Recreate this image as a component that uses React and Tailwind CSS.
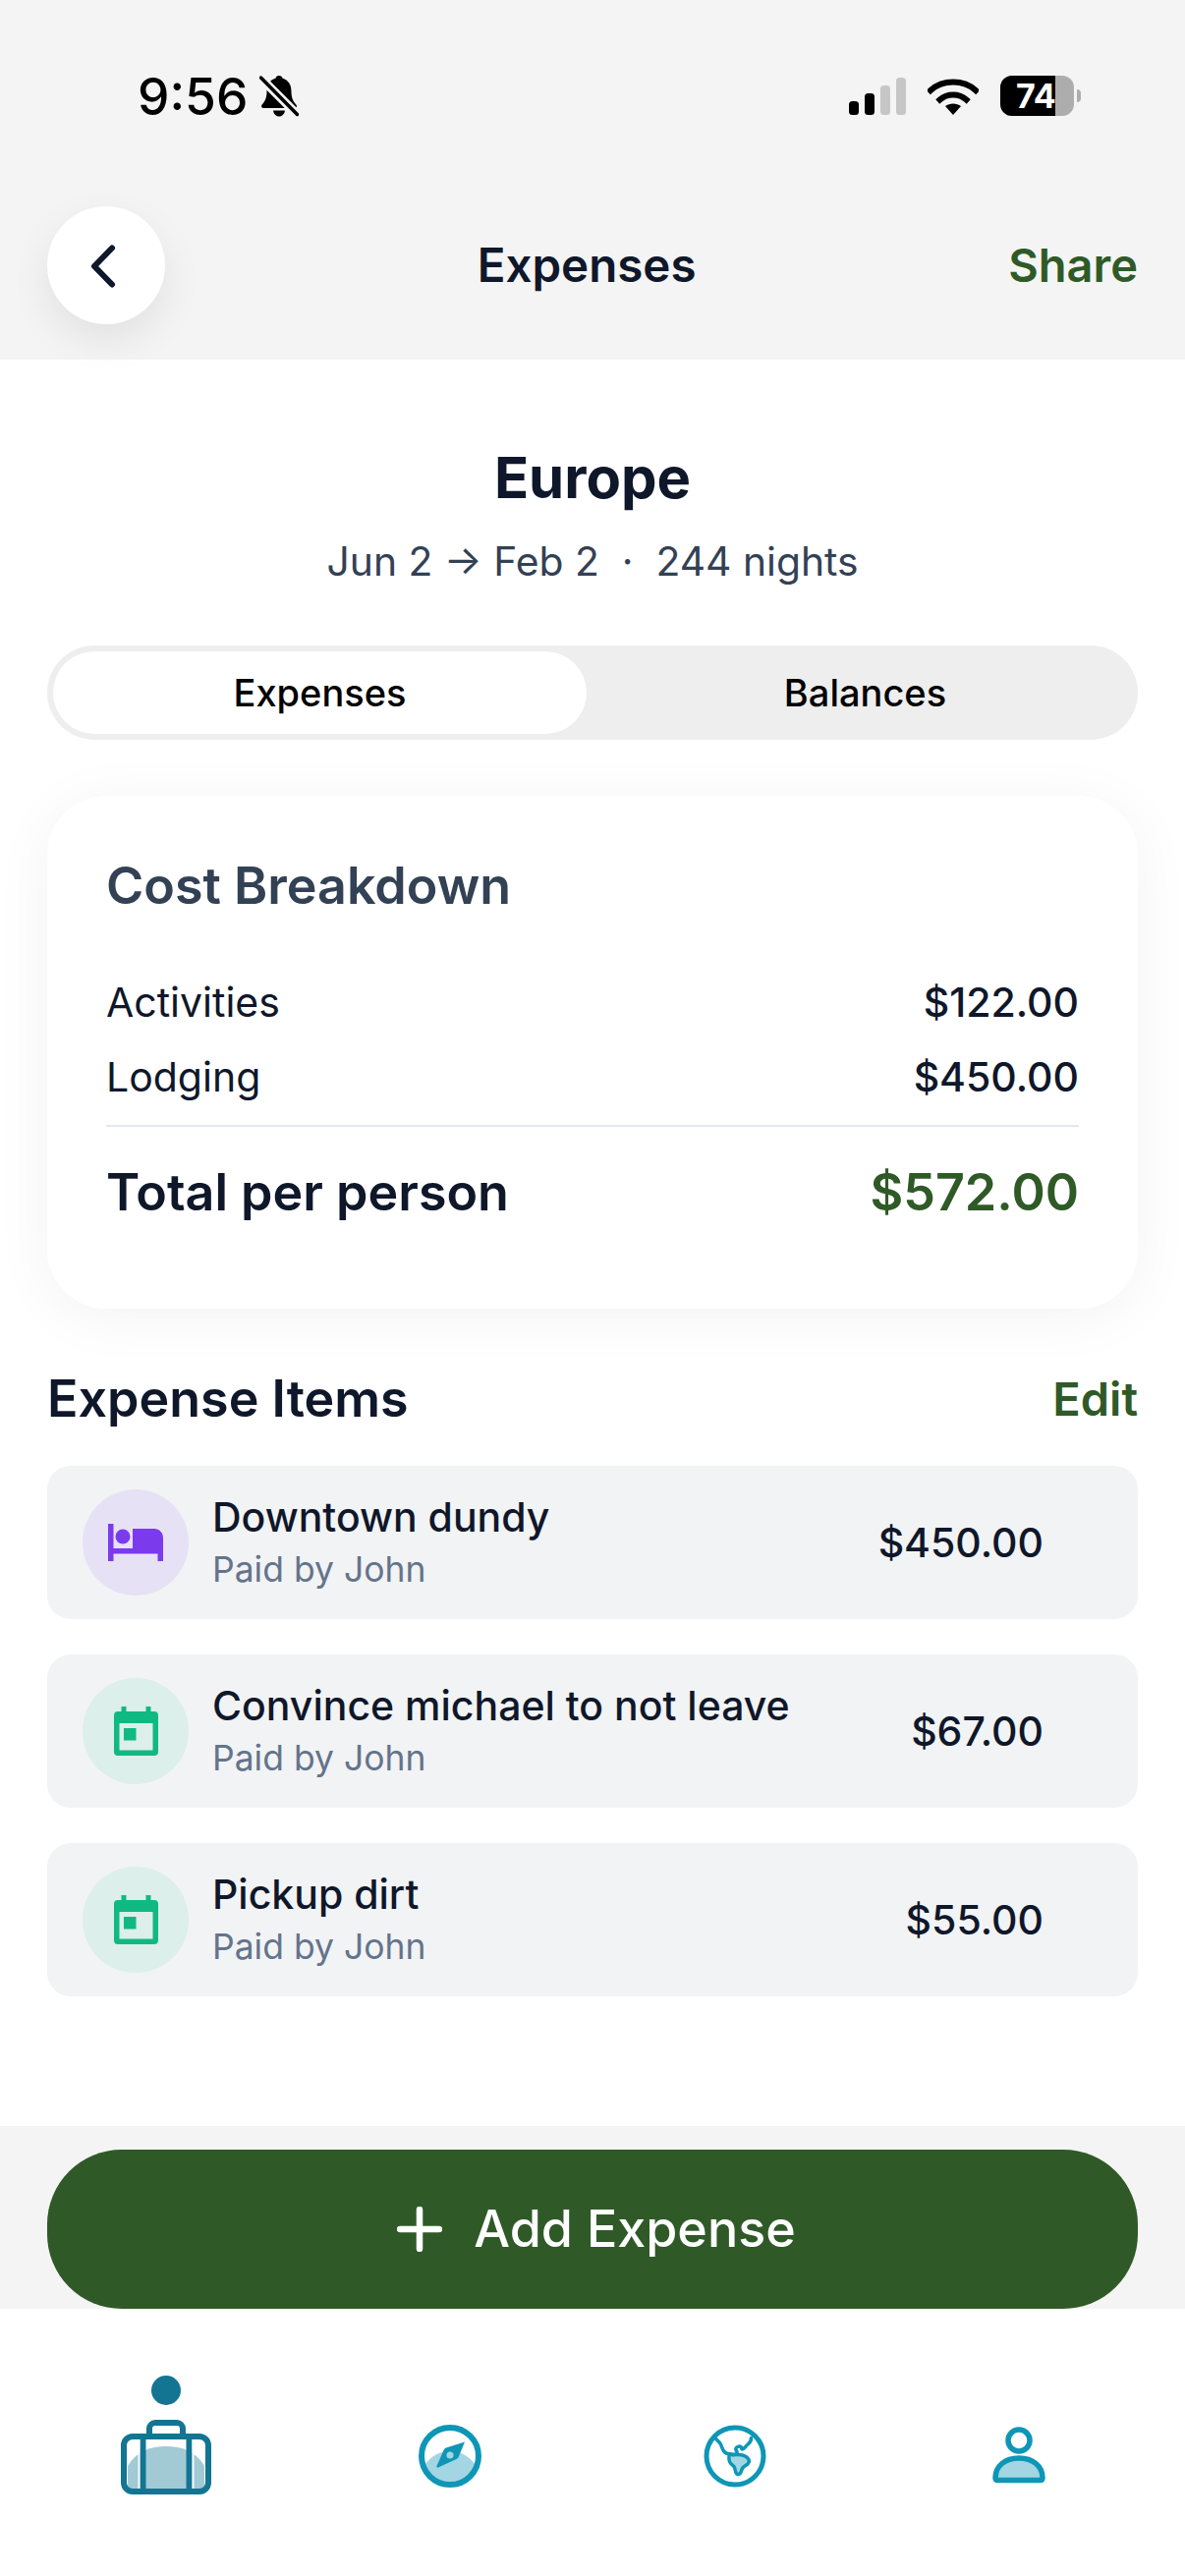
import React from "react";

const NAVY = "#0f172a";

function BellOff() {
  return (
    <svg width="40" height="42" viewBox="0 0 40 42" className="ml-[12px]">
      <path d="M20 0c2 0 3.200 1.200 3.600 2.800C29.500 4.400 32.500 9.500 32.500 16c0 6 1.500 9.500 4 12.500.8 1 1.500 1.700 1.500 2.600 0 1-.8 1.900-2 1.900H4c-1.200 0-2-.9-2-1.900 0-.9.7-1.600 1.500-2.600C6 25.500 7.500 22 7.500 16c0-6.500 3-11.600 8.900-13.200C16.800 1.200 18 0 20 0z" fill="#000" />
      <path d="M14 35.500h12c-.4 3.500-3 6-6 6s-5.600-2.500-6-6z" fill="#000" />
      <path d="M0 1 40 41" stroke="#f4f4f4" strokeWidth="9" />
      <path d="M1.500 2 38.500 39.500" stroke="#000" strokeWidth="3.500" strokeLinecap="round" />
    </svg>
  );
}

function Signal() {
  return (
    <svg width="58" height="38" viewBox="0 0 58 38">
      <rect x="0" y="24" width="10" height="14" rx="3.500" fill="#000" />
      <rect x="16" y="16" width="10" height="22" rx="3.500" fill="#000" />
      <rect x="32" y="8" width="10" height="30" rx="3.500" fill="#c6c6c6" />
      <rect x="48" y="0" width="10" height="38" rx="3.500" fill="#c6c6c6" />
    </svg>
  );
}

function Wifi() {
  return (
    <svg width="52" height="38" viewBox="0 0 52 38" className="ml-[22px]">
      <path d="M3 13C9 7.500 17 4.500 26 4.500S43 7.500 49 13" fill="none" stroke="#000" strokeWidth="6" strokeLinecap="square" />
      <path d="M12.500 22.500C16 19.400 20.800 17.500 26 17.500s10 1.900 13.500 5" fill="none" stroke="#000" strokeWidth="6" strokeLinecap="square" />
      <path d="M18 29c2.200-1.600 5-2.500 8-2.500s5.800.9 8 2.500L26 38z" fill="#000" />
    </svg>
  );
}

function Battery() {
  return (
    <div className="ml-[22px] flex items-center">
      <div className="h-[41px] w-[75px] overflow-hidden rounded-[12px] bg-[#adadad]">
        <div className="h-full w-[56px] overflow-hidden bg-black pl-[16px] text-[34px] leading-[41px] font-bold text-white">74</div>
      </div>
      <div className="ml-[3px] h-[13px] w-[4px] rounded-r-full bg-[#adadad]" />
    </div>
  );
}

function ChevronLeft() {
  return (
    <svg width="30" height="46" viewBox="0 0 30 46" fill="none">
      <path d="M24 4.500 6 23l18 18.500" stroke={NAVY} strokeWidth="6" strokeLinecap="round" strokeLinejoin="round" />
    </svg>
  );
}

function BedIcon() {
  return (
    <svg width="56" height="38" viewBox="0 0 56 38" fill="#7c3aed">
      <path d="M0 0h5.500v25h19.500V5h22c5 0 9 4 9 9v24h-5.500v-7.500H5.500V38H0z" />
      <circle cx="15" cy="13" r="7.500" />
    </svg>
  );
}

function CalendarIcon() {
  return (
    <svg width="45" height="50" viewBox="0 0 45 50">
      <rect x="7.500" y="0" width="5" height="8" fill="#10b981" />
      <rect x="32.500" y="0" width="5" height="8" fill="#10b981" />
      <path fillRule="evenodd" d="M4 5h37a4 4 0 0 1 4 4v37a4 4 0 0 1-4 4H4a4 4 0 0 1-4-4V9a4 4 0 0 1 4-4zM5.500 17v27.500h34V17z" fill="#10b981" />
      <rect x="10" y="22" width="12.500" height="12.500" fill="#10b981" />
    </svg>
  );
}

function PlusIcon() {
  return (
    <svg width="46" height="46" viewBox="0 0 46 46" fill="none" className="shrink-0">
      <path d="M23 3v40M3 23h40" stroke="#fff" strokeWidth="6.500" strokeLinecap="round" />
    </svg>
  );
}

function Suitcase() {
  return (
    <svg width="92" height="76" viewBox="0 0 92 76" fill="none">
      <path d="M7 47C16 32 30 27 46 27s30 5 39 20v19a5 5 0 0 1-5 5H12a5 5 0 0 1-5-5z" fill="#a2cad5" />
      <path d="M29 15V9a6 6 0 0 1 6-6h22a6 6 0 0 1 6 6v6" stroke="#137592" strokeWidth="6" />
      <rect x="3" y="17" width="86" height="56" rx="9" stroke="#137592" strokeWidth="6" />
      <path d="M22.500 16v56M69.500 16v56" stroke="#137592" strokeWidth="6" />
      <path d="M18.500 20v50M73.500 20v50" stroke="#fff" strokeWidth="2" opacity="0.9" />
    </svg>
  );
}

function Compass() {
  return (
    <svg width="64" height="64" viewBox="0 0 64 64" fill="none">
      <path d="M5.500 42C13 31 22 27 32 27s19 4 26.500 15C54 53 44 60 32 60S10 53 5.500 42z" fill="#a3d5e3" />
      <circle cx="32" cy="32" r="29" stroke="#0e96b6" strokeWidth="6" />
      <path d="M47 17.500 41 32c-.5 1.500-1 2-2.500 3L20 43.500c-1 .5-2-.5-1.500-1.500L25.500 26c.5-1.200 1.200-2 2.500-2.500z" fill="#0e96b6" />
      <circle cx="32" cy="31" r="3.500" fill="#a3d5e3" />
    </svg>
  );
}

function Globe() {
  return (
    <svg width="64" height="64" viewBox="0 0 64 64" fill="none">
      <path d="M27 30c3 .5 5 .5 8 .5 4 0 9 1.500 11 5 1 2.500-1 5-4 6.500-2 1-3 3-3.500 5-.5 2-2 4-4 3.500-2-.5-2-4-3-7-1-2.500-4-3-5-6-.7-2.500-1-5.500.5-7.500z" fill="#a3d5e3" stroke="#0e96b6" strokeWidth="3.500" strokeLinejoin="round" />
      <path d="M27 30c3 1 6 .5 7-1 1-1.500-2-3-1-5 1-2 4-2.500 5.500-1 1 1-.5 2 1 2 2 0 3-3 6-5.500 2-1.500 3-3 3-6" stroke="#0e96b6" strokeWidth="3.500" strokeLinecap="round" />
      <path d="M11 13c3 3 5 4 6.500 7 1 2 2 6 4 8 2 1.500 3.500 2 5.500 2" stroke="#0e96b6" strokeWidth="3.500" strokeLinecap="round" />
      <circle cx="32" cy="32" r="29" stroke="#0e96b6" strokeWidth="5" />
    </svg>
  );
}

function Person() {
  return (
    <svg width="54" height="58" viewBox="0 0 54 58" fill="none">
      <circle cx="27" cy="14" r="11" stroke="#0e96b6" strokeWidth="5.500" />
      <path d="M3 52c0-12 10-20 24-20s24 8 24 20c0 1.500-.8 2.500-2.500 2.500h-43C3.800 54.500 3 53.500 3 52z" fill="#a3d5e3" stroke="#0e96b6" strokeWidth="5.500" strokeLinejoin="round" />
    </svg>
  );
}

function ExpenseRow({ title, amount, bg, icon }) {
  return (
    <div className="flex h-[156px] items-center rounded-[24px] bg-[#f2f3f5] pl-[36px] pr-[96px]">
      <div className={`flex size-[108px] shrink-0 items-center justify-center rounded-full ${bg}`}>{icon}</div>
      <div className="ml-[24px] flex-1">
        <div className="text-[41px] leading-[52px] font-medium text-[#0f172a]">{title}</div>
        <div className="mt-[3px] text-[35.500px] leading-[50px] text-[#64748b]">Paid by John</div>
      </div>
      <div className="pt-[2px] text-[41px] font-medium text-[#0f172a]">{amount}</div>
    </div>
  );
}

function Row({ label, value }) {
  return (
    <div className="flex h-[76px] items-center justify-between text-[41px] text-[#0f172a]">
      <span>{label}</span>
      <span className="font-medium">{value}</span>
    </div>
  );
}

export default function App() {
  return (
    <div className="flex h-[2622px] w-[1206px] flex-col overflow-hidden bg-white font-['Inter',sans-serif]">
      <header className="h-[366px] shrink-0 bg-[#f4f4f4]">
        <div className="flex h-[210px] items-start justify-between pl-[140px] pr-[106px] pt-[71px]">
          <div className="flex items-center">
            <span className="text-[51.500px] leading-[54px] font-medium text-black">9:56</span>
            <BellOff />
          </div>
          <div className="flex items-center pt-[6px]">
            <Signal />
            <Wifi />
            <Battery />
          </div>
        </div>
        <div className="flex h-[120px] items-center justify-between px-[48px]">
          <button className="flex size-[120px] items-center justify-center rounded-full bg-white pr-[7px] pt-[2px] shadow-[0_16px_40px_rgba(0,0,0,0.08)]">
            <ChevronLeft />
          </button>
          <span className="text-[47.500px] font-semibold text-[#0f172a]">Expenses</span>
          <span className="text-[47px] font-semibold text-[#2f5a27]">Share</span>
        </div>
      </header>

      <main className="flex-1 px-[48px]">
        <h1 className="mt-[86px] text-center text-[58px] leading-[68px] font-bold text-[#0f172a]">Europe</h1>
        <p className="mt-[26px] text-center text-[40.800px] leading-[50px] text-[#334155]">Jun 2 → Feb 2 &nbsp;·&nbsp; 244 nights</p>

        <div className="mt-[61px] flex h-[96px] rounded-full bg-[#eeeeee] p-[6px]">
          <div className="flex w-[543px] items-center justify-center rounded-full bg-white text-[38px] font-medium text-black">Expenses</div>
          <div className="flex flex-1 items-center justify-center pl-[12px] text-[38px] font-medium text-black">Balances</div>
        </div>

        <section className="mt-[57px] h-[522px] rounded-[60px] bg-white px-[60px] pt-[60px] shadow-[0_8px_60px_rgba(0,0,0,0.05)]">
          <h2 className="text-[52px] leading-[64px] font-semibold text-[#334155]">Cost Breakdown</h2>
          <div className="mt-[49px]">
            <Row label="Activities" value="$122.00" />
            <Row label="Lodging" value="$450.00" />
          </div>
          <div className="mt-[10px] flex h-[136px] items-center justify-between border-t-2 border-[#e2e8f0]">
            <span className="text-[52px] font-semibold text-[#0f172a]">Total per person</span>
            <span className="text-[52px] font-semibold text-[#2f5a27]">$572.00</span>
          </div>
        </section>

        <div className="mt-[60px] flex h-[64px] items-center justify-between">
          <span className="text-[52px] font-semibold text-[#0f172a]">Expense Items</span>
          <span className="text-[47px] font-semibold text-[#2f5a27]">Edit</span>
        </div>

        <div className="mt-[36px] flex flex-col gap-[36px]">
          <ExpenseRow title="Downtown dundy" amount="$450.00" bg="bg-[#e7e1f6]" icon={<BedIcon />} />
          <ExpenseRow title="Convince michael to not leave" amount="$67.00" bg="bg-[#dcefea]" icon={<CalendarIcon />} />
          <ExpenseRow title="Pickup dirt" amount="$55.00" bg="bg-[#dcefea]" icon={<CalendarIcon />} />
        </div>
      </main>

      <div className="h-[186px] shrink-0 bg-[#f4f4f4] px-[48px] pt-[24px]">
        <button className="flex h-[162px] w-full items-center justify-center gap-[32px] rounded-[76px] bg-[#2f5a27] pl-[8px] text-[52px] font-medium text-white">
          <PlusIcon />
          <span>Add Expense</span>
        </button>
      </div>

      <nav className="grid h-[272px] shrink-0 grid-cols-4 bg-white px-[24px]">
        <div className="flex flex-col items-center pt-[68px]">
          <div className="size-[30px] rounded-full bg-[#137592]" />
          <div className="mt-[15px]"><Suitcase /></div>
        </div>
        <div className="flex justify-center pt-[118px]"><Compass /></div>
        <div className="flex justify-center pt-[118px]"><Globe /></div>
        <div className="flex justify-center pt-[120px]"><Person /></div>
      </nav>
    </div>
  );
}
